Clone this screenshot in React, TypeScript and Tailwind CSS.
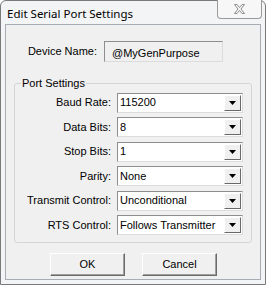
import { ReactNode } from 'react'

const rows: [string, string][] = [
  ['Baud Rate:', '115200'],
  ['Data Bits:', '8'],
  ['Stop Bits:', '1'],
  ['Parity:', 'None'],
  ['Transmit Control:', 'Unconditional'],
  ['RTS Control:', 'Follows Transmitter'],
]

function Combo({ value }: { value: string }) {
  return (
    <div className="w-[126px] h-[20px] flex items-center bg-white border border-t-[#8d8d8d] border-l-[#8d8d8d] border-r-[#dcdcdc] border-b-[#dcdcdc] pl-[2px] pr-[1px]">
      <span className="flex-1 leading-none">{value}</span>
      <div className="w-[17px] h-[16px] flex items-center justify-center bg-[#f0f0f0] border border-t-white border-l-white border-r-[#696969] border-b-[#696969]">
        <svg width="7" height="4" viewBox="0 0 7 4">
          <path d="M0 0h7L3.5 4z" fill="#000" />
        </svg>
      </div>
    </div>
  )
}

function Btn({ children }: { children: ReactNode }) {
  return (
    <button
      type="button"
      className="w-[75px] h-[23px] bg-[#f0f0f0] border border-t-white border-l-white border-r-[#6a6a6a] border-b-[#6a6a6a] shadow-[inset_-1px_-1px_0_#a0a0a0]"
    >
      {children}
    </button>
  )
}

export default function App() {
  return (
    <div className="w-[267px] h-[286px] bg-white text-[11px] text-black" style={{ fontFamily: '"Liberation Sans", Arial, sans-serif' }}>
      <div className="w-[266px] h-[285px] border border-[#7a7a7a] rounded-t-[6px] bg-[#f3f4f5] flex flex-col px-[4px] pb-[4px]">
        {/* title bar */}
        <div className="h-[23px] flex items-start relative">
          <span className="pl-[2px] pt-[4px] text-[11.5px]" style={{ fontFamily: '"Noto Sans", sans-serif' }}>
            Edit Serial Port Settings
          </span>
          <div className="absolute right-[-1px] top-[-1px] w-[45px] h-[19px] border border-[#9a9a9a] border-t-0 rounded-b-[4px] bg-[#f7f7f7] flex items-center justify-center">
            <svg width="11" height="10" viewBox="0 0 11 10">
              <path d="M0.5 0.5h2.5l2.5 3 2.5-3h2.5l-3.5 4.5 3.5 4.5h-2.5l-2.5-3-2.5 3h-2.5l3.5-4.5z" fill="none" stroke="#8c8c8c" />
            </svg>
          </div>
        </div>

        {/* client area */}
        <div className="flex-1 border border-[#a8adb3] bg-[#f0f0f0] flex flex-col">
          <div className="flex items-center mt-[16px] h-[21px]">
            <span className="w-[91px] text-right">Device Name:</span>
            <div className="ml-[7px] w-[119px] h-[21px] border border-t-[#8d8d8d] border-l-[#8d8d8d] border-r-[#dcdcdc] border-b-[#dcdcdc] bg-[#f0f0f0] pl-[7px] pt-[3px]">
              @MyGenPurpose
            </div>
          </div>

          <fieldset className="mx-[8px] mt-[13px] w-[238px] h-[168px] border border-[#d5d5d5] rounded-[3px] pl-[3px]">
            <legend className="px-[1px] ml-[3px] text-[11px]">Port Settings</legend>
            <div className="flex flex-col gap-[4.5px] mt-[1px]">
              {rows.map(([label, value]) => (
                <div key={label} className="flex items-center">
                  <span className="w-[93px] text-right">{label}</span>
                  <div className="ml-[6px]">
                    <Combo value={value} />
                  </div>
                </div>
              ))}
            </div>
          </fieldset>

          <div className="flex gap-[17px] mt-[10px] pl-[44px]">
            <Btn>OK</Btn>
            <Btn>Cancel</Btn>
          </div>
        </div>
      </div>
    </div>
  )
}
